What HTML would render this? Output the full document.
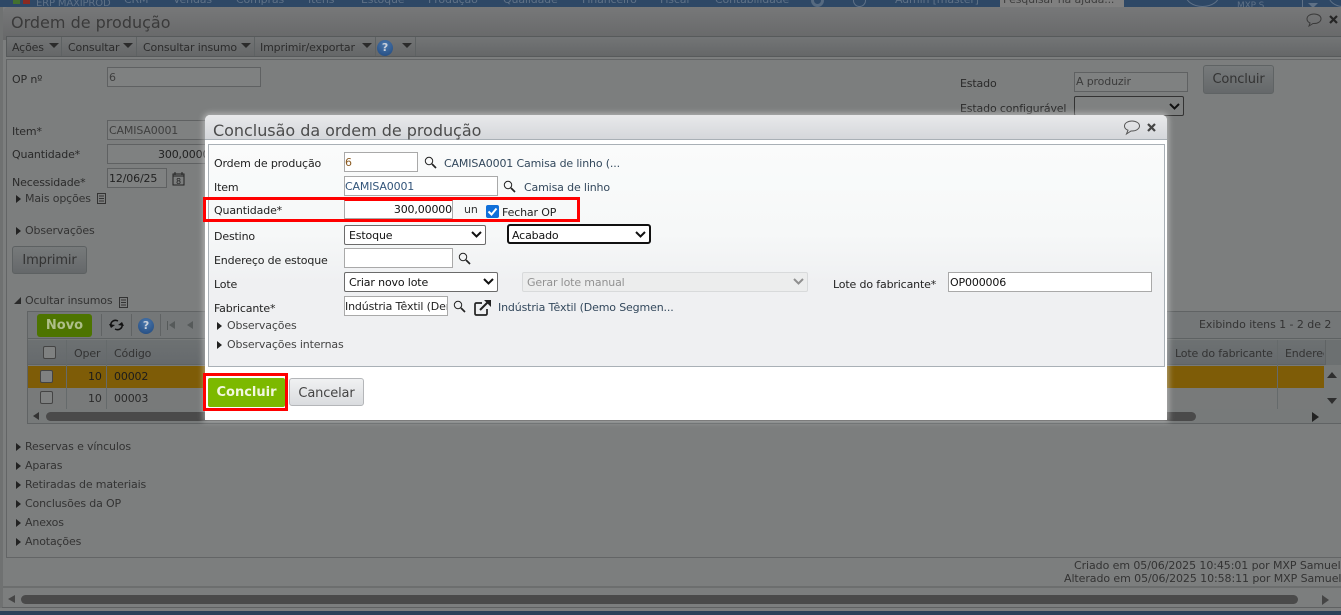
<!DOCTYPE html>
<html lang="pt"><head><meta charset="utf-8"><title>Ordem de produção</title>
<style>
html,body{margin:0;padding:0;width:1341px;height:615px;overflow:hidden;background:#7d7f7f}
*{box-sizing:border-box}
body{font:11px "DejaVu Sans",sans-serif;letter-spacing:-.15px;color:#222;position:relative}
.a,.t,.i{position:absolute}
.t{white-space:nowrap;line-height:14px;margin-top:1px}
.b{color:#2a2a2a}
.d{color:#333}
.i{border:1px solid #5f6162;background:#7f8181;color:#3f3f3f;height:20px;line-height:19px;padding-left:1px;white-space:nowrap;overflow:hidden}
.m{background:#fff;border:1px solid #a9a9a9;color:#111;height:20px;line-height:20px;padding-left:0;white-space:nowrap;overflow:hidden;position:absolute}
.s{position:absolute;background:#fff;border:1px solid #6b6b6b;border-radius:2px;height:20px;line-height:20px;padding-left:4px;color:#111;white-space:nowrap}
.s svg,.bgsel svg{position:absolute;right:3px;top:5px}
.arr{position:absolute;width:0;height:0;border-top:4px solid transparent;border-bottom:4px solid transparent;border-left:5px solid #222}
.dn{position:absolute;width:0;height:0;border-left:5px solid transparent;border-right:5px solid transparent;border-top:5px solid #2b2b2b}
.sep{position:absolute;top:37px;width:1px;height:19px;background:#5e6263}
.cell{position:absolute;width:1px;background:#656a6b}
</style></head><body>

<!-- top nav -->
<div class="a" style="left:0;top:0;width:1341px;height:7px;background:#2e4866;overflow:hidden;color:#5f7186">
<div class="a" style="left:13px;top:0;width:7px;height:4px;background:#43702f"></div>
<div class="a" style="left:23px;top:0;width:7px;height:4px;background:#8a2a22"></div>
<span class="t" style="left:36px;top:-4px;font-size:10px">ERP MAXIPROD</span>
<span class="t" style="left:124px;top:-8px">CRM</span>
<span class="t" style="left:173px;top:-8px">Vendas</span>
<span class="t" style="left:236px;top:-8px">Compras</span>
<span class="t" style="left:308px;top:-8px">Itens</span>
<span class="t" style="left:361px;top:-8px">Estoque</span>
<span class="t" style="left:428px;top:-8px">Produção</span>
<span class="t" style="left:503px;top:-8px">Qualidade</span>
<span class="t" style="left:582px;top:-8px">Financeiro</span>
<span class="t" style="left:660px;top:-8px">Fiscal</span>
<span class="t" style="left:715px;top:-8px">Contabilidade</span>
<div class="a" style="left:811px;top:-6px;width:13px;height:13px;border:3px solid #566a80;border-radius:50%"></div>
<div class="a" style="left:853px;top:-6px;width:13px;height:13px;border:1px solid #5f7186;border-radius:50%"></div>
<span class="t" style="left:895px;top:-8px">Admin [master]</span>
<div class="a" style="left:1000px;top:-4px;width:124px;height:11px;background:#808080;color:#3e3e3e;padding-left:3px;line-height:8px">Pesquisar na ajuda...</div>
<div class="a" style="left:1185px;top:-18px;width:35px;height:25px;border:1px solid #5f7186;border-radius:50%"></div>
<span class="t" style="left:1237px;top:0;font-size:9px;line-height:10px">MXP S</span>
<div class="a" style="left:1302px;top:0;width:1px;height:7px;background:#5f7186"></div>
<div class="dn" style="left:1308px;top:3px;border-top-color:#5f7186"></div>
<div class="a" style="left:1328px;top:-17px;width:30px;height:24px;border:1px solid #5f7186;border-radius:50%"></div>
</div>

<!-- window background -->
<div class="a" style="left:0;top:7px;width:1341px;height:601px;background:#7c7e7e"></div>
<div class="a" style="left:3px;top:7px;width:1338px;height:33px;background:linear-gradient(#777879,#676869);border-radius:5px 0 0 0"></div>
<div class="a" style="left:0;top:7px;width:3px;height:601px;background:#6f7171"></div>
<span class="t" style="left:11px;top:12px;font-size:16px;letter-spacing:0;line-height:20px;color:#3a3a3a">Ordem de produção</span>
<svg class="a" style="left:1305px;top:12px" width="18" height="16" viewBox="0 0 18 16"><path d="M9 2C5 2 2 4 2 7c0 2 1 3 3 4l-1 3 4-2.500h1c4 0 7-2 7-4.800C16 4 13 2 9 2z" fill="none" stroke="#3b3b3b"/></svg>
<svg class="a" style="left:1329px;top:15px" width="10" height="10"><path d="M1 1L8 8M8 1L1 8" stroke="#252525" stroke-width="2.200"/></svg>

<!-- toolbar -->
<div class="a" style="left:6px;top:36px;width:1335px;height:21px;background:linear-gradient(#737576,#656768);border:1px solid #575a5b;border-right:0"></div>
<div class="a" style="left:6px;top:59px;width:1335px;height:499px;border:1px solid #636566;border-right:0"></div>
<span class="t" style="left:12px;top:40px;color:#2c2c2c">Ações</span><div class="dn" style="left:49px;top:43px"></div>
<div class="sep" style="left:61px"></div>
<span class="t" style="left:68px;top:40px;color:#2c2c2c">Consultar</span><div class="dn" style="left:123px;top:43px"></div>
<div class="sep" style="left:136px"></div>
<span class="t" style="left:143px;top:40px;color:#2c2c2c">Consultar insumo</span><div class="dn" style="left:241px;top:43px"></div>
<div class="sep" style="left:254px"></div>
<span class="t" style="left:260px;top:40px;color:#2c2c2c">Imprimir/exportar</span><div class="dn" style="left:362px;top:43px"></div>
<div class="sep" style="left:375px"></div>
<div class="a" style="left:377px;top:40px;width:16px;height:16px;border-radius:50%;background:radial-gradient(circle at 50% 30%,#4b78ad,#1f477c);color:#c9d0da;font:bold 11px/16px 'DejaVu Sans',sans-serif;text-align:center">?</div>
<div class="dn" style="left:402px;top:43px"></div>
<div class="sep" style="left:415px"></div>

<!-- main form -->
<span class="t b" style="left:12px;top:72px">OP nº</span>
<div class="i" style="left:107px;top:67px;width:154px">6</div>
<span class="t b" style="left:12px;top:124px">Item*</span>
<div class="i" style="left:107px;top:120px;width:110px">CAMISA0001</div>
<span class="t b" style="left:12px;top:147px">Quantidade*</span>
<div class="i" style="left:107px;top:144px;width:110px;padding-left:50px;color:#222">300,00000</div>
<span class="t b" style="left:12px;top:175px">Necessidade*</span>
<div class="i" style="left:107px;top:168px;width:60px;color:#222">12/06/25</div>
<svg class="a" style="left:172px;top:172px" width="13" height="14" viewBox="0 0 13 14"><rect x="1" y="2" width="11" height="11" fill="none" stroke="#222"/><path d="M3 0v3M10 0v3M1 4h11" stroke="#222"/><text x="4" y="12" font-size="8" font-family="DejaVu Sans" fill="#222">8</text></svg>
<div class="arr" style="left:16px;top:195px"></div>
<span class="t d" style="left:25px;top:191px">Mais opções</span>
<svg class="a" style="left:97px;top:193px" width="9" height="11"><rect x=".5" y=".5" width="8" height="10" fill="none" stroke="#333"/><path d="M2 3h5M2 5.500h5M2 8h5" stroke="#333"/></svg>
<div class="arr" style="left:16px;top:227px"></div>
<span class="t d" style="left:25px;top:223px">Observações</span>
<div class="a" style="left:12px;top:246px;width:75px;height:28px;border:1px solid #5d6162;border-radius:3px;background:linear-gradient(#777a7b,#65686a);font-size:13px;line-height:28px;text-align:center;color:#333">Imprimir</div>

<span class="t b" style="left:960px;top:76px">Estado</span>
<div class="i" style="left:1074px;top:72px;width:114px;color:#3c3c3c;line-height:18px">A produzir</div>
<div class="a" style="left:1203px;top:65px;width:71px;height:29px;border:1px solid #5f6364;border-radius:3px;background:linear-gradient(#777a7b,#65686a);font-size:13px;line-height:28px;text-align:center;color:#333">Concluir</div>
<span class="t b" style="left:960px;top:101px">Estado configurável</span>
<div class="a" style="left:1074px;top:96px;width:110px;height:20px;border:1px solid #333;border-radius:2px;background:#7f8181"><svg class="a" style="right:3px;top:6px" width="11" height="8"><path d="M1 1l4.500 4.500L10 1" fill="none" stroke="#111" stroke-width="2"/></svg></div>

<!-- Insumos -->
<div class="a" style="left:14px;top:297px;width:0;height:0;border-left:7px solid transparent;border-bottom:7px solid #2a2a2a"></div>
<span class="t d" style="left:25px;top:293px">Ocultar insumos</span>
<svg class="a" style="left:119px;top:297px" width="9" height="11"><rect x=".5" y=".5" width="8" height="10" fill="none" stroke="#333"/><path d="M2 3h5M2 5.500h5M2 8h5" stroke="#333"/></svg>

<div class="a" style="left:27px;top:311px;width:1314px;height:113px;border:1px solid #606364;border-right:0;background:#777a7a"></div>
<div class="a" style="left:28px;top:312px;width:1313px;height:27px;background:#747778;border-bottom:1px solid #5e6263"></div>
<div class="a" style="left:37px;top:314px;width:55px;height:23px;background:#4d7400;border-radius:3px;color:#aebf89;font:bold 13px/24px 'DejaVu Sans',sans-serif;letter-spacing:0;text-align:center">Novo</div>
<div class="a" style="left:101px;top:314px;width:1px;height:22px;background:#606364"></div>
<svg class="a" style="left:109px;top:318px" width="15" height="14" viewBox="0 0 15 14"><path d="M2 8C1 4 5 1 9 3M13 6c1 4-3 7-7 5" fill="none" stroke="#111" stroke-width="1.500"/><path d="M6 7l-4 3-2-4zM9 7l4-3 2 4z" fill="#111"/></svg>
<div class="a" style="left:131px;top:314px;width:1px;height:22px;background:#606364"></div>
<div class="a" style="left:138px;top:318px;width:16px;height:16px;border-radius:50%;background:radial-gradient(circle at 50% 30%,#4b78ad,#1f477c);color:#c9d0da;font:bold 11px/16px 'DejaVu Sans',sans-serif;text-align:center">?</div>
<div class="a" style="left:160px;top:314px;width:1px;height:22px;background:#606364"></div>
<div class="a" style="left:167px;top:321px;width:1px;height:9px;background:#565a5a"></div>
<div class="a" style="left:169px;top:321px;width:0;height:0;border-top:4.500px solid transparent;border-bottom:4.500px solid transparent;border-right:6px solid #565a5a"></div>
<div class="a" style="left:187px;top:321px;width:0;height:0;border-top:4.500px solid transparent;border-bottom:4.500px solid transparent;border-right:6px solid #565a5a"></div>
<span class="t d" style="left:1199px;top:317px;letter-spacing:-.06px">Exibindo itens 1 - 2 de 2</span>

<div class="a" style="left:28px;top:340px;width:1297px;height:25px;background:linear-gradient(#6d7172,#666a6d);border-bottom:1px solid #5f6364"></div>
<div class="a" style="left:1325px;top:340px;width:16px;height:25px;background:#6c7071;border-left:1px solid #5f6364"></div>
<div class="a" style="left:43px;top:346px;width:13px;height:13px;border:1px solid #444;border-radius:2px;background:#7f8181"></div>
<span class="t d" style="left:74px;top:346px">Oper</span>
<span class="t d" style="left:114px;top:346px">Código</span>
<span class="t d" style="left:1175px;top:346px">Lote do fabricante</span>
<span class="t d" style="left:1285px;top:346px;width:39px;overflow:hidden">Endereço</span>

<div class="a" style="left:28px;top:366px;width:1296px;height:22px;background:#7e5c07"></div>
<div class="a" style="left:28px;top:388px;width:1296px;height:21px;background:#787a7a"></div>
<div class="a" style="left:40px;top:370px;width:13px;height:13px;border:1px solid #444;border-radius:2px;background:#7f8181"></div>
<div class="a" style="left:40px;top:391px;width:13px;height:13px;border:1px solid #444;border-radius:2px;background:#7f8181"></div>
<span class="t" style="left:88px;top:369px;color:#1c1c1c">10</span><span class="t" style="left:114px;top:369px;color:#1c1c1c">00002</span>
<span class="t" style="left:88px;top:391px;color:#2a2a2a">10</span><span class="t" style="left:114px;top:391px;color:#2a2a2a">00003</span>
<div class="cell" style="left:66px;top:340px;height:69px"></div>
<div class="cell" style="left:106px;top:340px;height:69px"></div>
<div class="cell" style="left:1277px;top:340px;height:69px"></div>
<div class="a" style="left:1327px;top:372px;width:0;height:0;border-left:5px solid transparent;border-right:5px solid transparent;border-bottom:6px solid #2e2e2e"></div>
<div class="a" style="left:1327px;top:398px;width:0;height:0;border-left:5px solid transparent;border-right:5px solid transparent;border-top:6px solid #2e2e2e"></div>
<div class="a" style="left:33px;top:412px;width:0;height:0;border-top:4.500px solid transparent;border-bottom:4.500px solid transparent;border-right:6px solid #333"></div>
<div class="a" style="left:46px;top:412px;width:1150px;height:9px;border-radius:5px;background:#4a4a4a"></div>
<div class="arr" style="left:1312px;top:412px;border-left-width:7px;border-top-width:5px;border-bottom-width:5px"></div>

<!-- sections -->
<div class="arr" style="left:16px;top:443px"></div><span class="t d" style="left:25px;top:439px">Reservas e vínculos</span>
<div class="arr" style="left:16px;top:462px"></div><span class="t d" style="left:25px;top:458px">Aparas</span>
<div class="arr" style="left:16px;top:481px"></div><span class="t d" style="left:25px;top:477px">Retiradas de materiais</span>
<div class="arr" style="left:16px;top:500px"></div><span class="t d" style="left:25px;top:496px">Conclusões da OP</span>
<div class="arr" style="left:16px;top:519px"></div><span class="t d" style="left:25px;top:515px">Anexos</span>
<div class="arr" style="left:16px;top:538px"></div><span class="t d" style="left:25px;top:534px">Anotações</span>

<span class="t d" style="left:1074px;top:558px;width:267px;overflow:hidden;letter-spacing:-.08px">Criado em 05/06/2025 10:45:01 por MXP Samuel</span>
<span class="t d" style="left:1064px;top:571px;width:277px;overflow:hidden;letter-spacing:-.08px">Alterado em 05/06/2025 10:58:11 por MXP Samuel</span>

<div class="a" style="left:3px;top:586px;width:1338px;height:2px;background:#6c6e6e"></div>
<div class="a" style="left:8px;top:595px;width:0;height:0;border-top:4.500px solid transparent;border-bottom:4.500px solid transparent;border-right:7px solid #454545"></div>
<div class="a" style="left:21px;top:595px;width:1277px;height:9px;border-radius:5px;background:#4a4a4a"></div>
<div class="arr" style="left:1322px;top:595px;border-left-width:7px;border-top-width:5px;border-bottom-width:5px;border-left-color:#454545"></div>
<div class="a" style="left:2px;top:607px;width:1339px;height:1px;background:#5f6162"></div>
<div class="a" style="left:0;top:611px;width:1341px;height:4px;background:#2b4159"></div>

<!-- modal -->
<div class="a" style="left:205px;top:115px;width:962px;height:305px;background:#fff;border-radius:5px 5px 0 0;box-shadow:0 0 6px 2px rgba(235,235,235,.45)">
  <div class="a" style="left:0;top:0;width:962px;height:25px;background:linear-gradient(#e8e9eb,#d5d7db);border-bottom:1px solid #a9b0b6;border-radius:5px 5px 0 0"></div>
</div>
<span class="t" style="left:213px;top:120px;font-size:16px;letter-spacing:-.03px;line-height:20px;color:#4c4c4c">Conclusão da ordem de produção</span>
<svg class="a" style="left:1123px;top:120px" width="18" height="16" viewBox="0 0 18 16"><path d="M9 1C5 1 1.500 3 1.500 6c0 2 1.500 3.500 3.500 4.200L3.500 14l4.500-3h1c4 0 7.500-2 7.500-5S13 1 9 1z" fill="none" stroke="#555"/></svg>
<svg class="a" style="left:1147px;top:123px" width="10" height="10"><path d="M1 1L8 8M8 1L1 8" stroke="#444" stroke-width="2.200"/></svg>
<div class="a" style="left:208px;top:144px;width:957px;height:223px;border:1px solid #a9b0b6;background:linear-gradient(#fafbfb 0,#f6f8f8 40%,#eff0f2 62%,#eff0f2 100%)"></div>

<span class="t" style="left:214px;top:156px">Ordem de produção</span>
<div class="m" style="left:344px;top:152px;width:74px;color:#8a5a20">6</div>
<svg class="a" style="left:424px;top:156px" width="13" height="13" viewBox="0 0 13 13"><circle cx="5" cy="5" r="3.700" fill="none" stroke="#222"/><path d="M8 8l4 4" stroke="#222" stroke-width="1.700"/></svg>
<span class="t" style="left:444px;top:156px;color:#33485c">CAMISA0001 Camisa de linho (...</span>

<span class="t" style="left:214px;top:180px">Item</span>
<div class="m" style="left:344px;top:176px;width:154px;color:#33557a">CAMISA0001</div>
<svg class="a" style="left:503px;top:180px" width="13" height="13" viewBox="0 0 13 13"><circle cx="5" cy="5" r="3.700" fill="none" stroke="#222"/><path d="M8 8l4 4" stroke="#222" stroke-width="1.700"/></svg>
<span class="t" style="left:524px;top:180px;color:#33485c">Camisa de linho</span>

<div class="a" style="left:203px;top:197px;width:377px;height:25px;border:3px solid #f00"></div>
<span class="t" style="left:214px;top:203px">Quantidade*</span>
<div class="m" style="left:344px;top:200px;width:109px;text-align:right;padding:0;line-height:18px;border-top-color:#f00;height:19px">300,00000</div>
<span class="t" style="left:464px;top:202px;color:#333">un</span>
<div class="a" style="left:486px;top:205px;width:13px;height:13px;background:#0f6fd9;border-radius:2px"><svg width="13" height="13"><path d="M2.500 6.500l3 3 5-6" fill="none" stroke="#fff" stroke-width="2"/></svg></div>
<span class="t" style="left:502px;top:205px;color:#222">Fechar OP</span>

<span class="t" style="left:214px;top:229px">Destino</span>
<div class="s" style="left:344px;top:225px;width:142px">Estoque<svg width="11" height="8"><path d="M1 1l4.500 4.500L10 1" fill="none" stroke="#111" stroke-width="2"/></svg></div>
<div class="s" style="left:507px;top:224px;width:144px;height:20px;border:2px solid #111;border-radius:3px;padding-left:3px;line-height:19px">Acabado<svg width="11" height="8"><path d="M1 1l4.500 4.500L10 1" fill="none" stroke="#111" stroke-width="2"/></svg></div>

<span class="t" style="left:214px;top:253px">Endereço de estoque</span>
<div class="m" style="left:344px;top:248px;width:109px"></div>
<svg class="a" style="left:458px;top:252px" width="13" height="13" viewBox="0 0 13 13"><circle cx="5" cy="5" r="3.700" fill="none" stroke="#222"/><path d="M8 8l4 4" stroke="#222" stroke-width="1.700"/></svg>

<span class="t" style="left:214px;top:277px">Lote</span>
<div class="s" style="left:344px;top:272px;width:154px">Criar novo lote<svg width="11" height="8"><path d="M1 1l4.500 4.500L10 1" fill="none" stroke="#111" stroke-width="2"/></svg></div>
<div class="s" style="left:522px;top:272px;width:286px;background:#eceded;border-color:#d8dadb;color:#929292">Gerar lote manual<svg width="11" height="8"><path d="M1 1l4.500 4.500L10 1" fill="none" stroke="#8f8f8f" stroke-width="2"/></svg></div>
<span class="t" style="left:833px;top:277px">Lote do fabricante*</span>
<div class="m" style="left:948px;top:272px;width:204px;padding-left:1px">OP000006</div>

<span class="t" style="left:214px;top:301px">Fabricante*</span>
<div class="m" style="left:344px;top:296px;width:104px;color:#222">Indústria Têxtil (Demo</div>
<svg class="a" style="left:453px;top:300px" width="13" height="13" viewBox="0 0 13 13"><circle cx="5" cy="5" r="3.700" fill="none" stroke="#222"/><path d="M8 8l4 4" stroke="#222" stroke-width="1.700"/></svg>
<svg class="a" style="left:474px;top:299px" width="18" height="17" viewBox="0 0 18 17"><path d="M8 4H2.500Q1 4 1 5.500v9Q1 16 2.500 16h9q1.500 0 1.500-1.500V10" fill="none" stroke="#222" stroke-width="1.700"/><path d="M6 11L15 2" stroke="#222" stroke-width="2"/><path d="M10 1h7v7z" fill="#222"/></svg>
<span class="t" style="left:498px;top:300px;color:#33485c">Indústria Têxtil (Demo Segmen...</span>

<div class="arr" style="left:217px;top:322px;border-left-color:#222"></div>
<span class="t" style="left:227px;top:318px;color:#444">Observações</span>
<div class="arr" style="left:217px;top:341px;border-left-color:#222"></div>
<span class="t" style="left:227px;top:337px;color:#444">Observações internas</span>

<div class="a" style="left:203px;top:373px;width:85px;height:38px;border:3px solid #f00;background:#fff"></div>
<div class="a" style="left:208px;top:378px;width:77px;height:29px;background:#7cb900;border-radius:2px;color:#f2f7df;font:bold 13px/30px 'DejaVu Sans',sans-serif;letter-spacing:0;text-align:center">Concluir</div>
<div class="a" style="left:289px;top:378px;width:75px;height:28px;border:1px solid #b4b6b9;border-radius:3px;background:linear-gradient(#f0f1f2,#dadcdf);font-size:13px;line-height:28px;padding-top:1px;text-align:center;color:#444">Cancelar</div>

</body></html>
